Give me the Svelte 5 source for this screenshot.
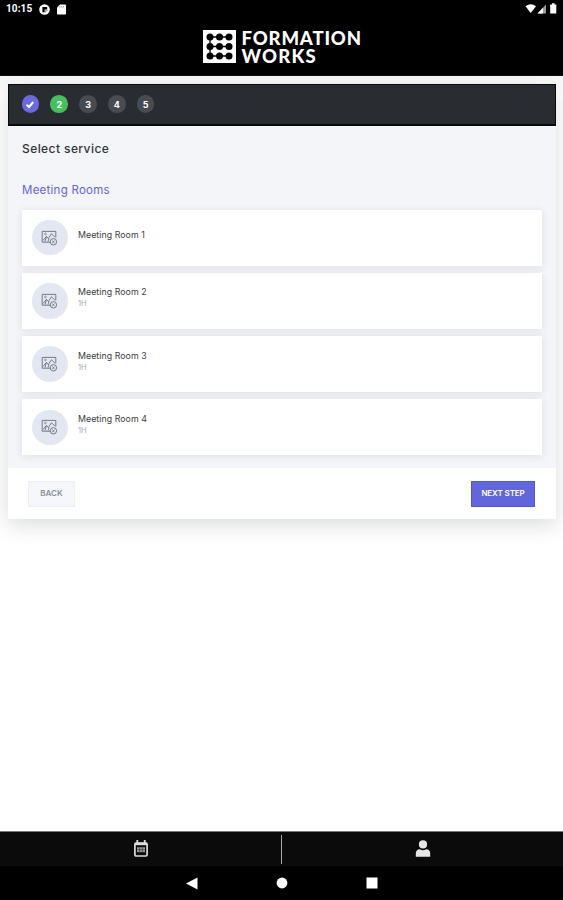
<script>
  const steps = ['✓', '2', '3', '4', '5'];
  const rooms = [
    { name: 'Meeting Room 1', length: '' },
    { name: 'Meeting Room 2', length: '1H' },
    { name: 'Meeting Room 3', length: '1H' },
    { name: 'Meeting Room 4', length: '1H' }
  ];
  const dots = [7, 16.5, 26];
</script>

<div class="screen">
  <div class="status">
    <span class="time">10:15</span>
    <svg class="dot" width="11" height="11" viewBox="0 0 11 11">
      <circle cx="5.5" cy="5.5" r="5.3" fill="#fff" />
      <path d="M3.4 8.2V3h4.8v2.5H5.7v2.7z" fill="#000" />
      <path d="M6.5 8.8V6.6h2.4" fill="none" stroke="#888" stroke-width=".8" />
    </svg>
    <svg class="sd" width="9" height="11" viewBox="0 0 9 11">
      <path d="M3 .5h5.2q.8 0 .8.8v8.4q0 .8-.8.8H.8q-.8 0-.8-.8V3.5z" fill="#fff" />
      <path d="M3 2v1.5M4.8 2v1.5M6.6 2v1.5" stroke="#777" stroke-width=".7" />
    </svg>
    <span class="grow"></span>
    <svg width="33" height="12" viewBox="0 0 33 12">
      <path d="M.5 3.2Q5.7-.8 11 3.2L5.7 10z" fill="#fff" />
      <path d="M12.5 10.5 21 1.5v9z" fill="#999" />
      <path d="M12.5 10.5 18 4.7v5.8z" fill="#fff" />
      <path d="M25.2 1.6h1.8V.3h2.6v1.3h1.7v8.9h-6.1z" fill="#fff" />
    </svg>
  </div>

  <header>
    <svg class="mark" width="33" height="33" viewBox="0 0 33 33">
      <rect width="33" height="33" fill="#fff" />
      <path d="M7 7h19M7 16.5h19M7 26h19M7 7v19" stroke="#000" stroke-width="1.3" />
      {#each dots as y}
        {#each dots as x}
          <circle cx={x} cy={y} r="3.5" fill="#000" />
        {/each}
      {/each}
    </svg>
    <div class="brand"><span class="b1">FORMATION</span><span class="b2">WORKS</span></div>
  </header>

  <main>
    <section class="card">
      <div class="steps">
        {#each steps as s, i}
          <span class="step" class:done={i === 0} class:active={i === 1}>
            {#if i === 0}
              <svg width="10" height="9" viewBox="0 0 10 9"><path d="M1.6 4.8 4 7l4.3-5" fill="none" stroke="#fff" stroke-width="2" /></svg>
            {:else}{s}{/if}
          </span>
        {/each}
      </div>
      <div class="body">
        <h1><span>Select service</span></h1>
        <h2><span>Meeting Rooms</span></h2>
        <div class="list">
          {#each rooms as room}
            <div class="room">
              <span class="thumb">
                <svg width="17" height="16" viewBox="0 0 17 16" fill="none" stroke="#69717b" stroke-width=".9">
                  <path d="M10 12.2H1.2V1.4h13.6v6" />
                  <path d="m2 10.5 3.4-4 2 2 3-4.7 3.7 3.4M5.4 6.5 4 11.5M8 8.5 7 11.5" />
                  <circle cx="4.4" cy="3.9" r=".9" stroke-width=".6" />
                  <circle cx="12.4" cy="11.8" r="3.2" />
                  <path d="m11.3 10.8 2.2 2.1M13.5 10.8l-2.2 2.1" />
                </svg>
              </span>
              <div class="label">
                <span class="name">{room.name}</span>
                {#if room.length}<span class="len">{room.length}</span>{/if}
              </div>
            </div>
          {/each}
        </div>
      </div>
      <footer>
        <button class="back">BACK</button>
        <button class="next">NEXT STEP</button>
      </footer>
    </section>
  </main>

  <nav class="tabs">
    <span class="tab first">
      <svg width="16" height="18" viewBox="0 0 16 18">
        <path d="M4.3 0v4M11.7 0v4" stroke="#ddd" stroke-width="1.8" />
        <rect x="1.9" y="3" width="12.2" height="13" rx="1.3" fill="none" stroke="#ddd" stroke-width="1.7" />
        <path d="M2 4h12" stroke="#ddd" stroke-width="2.4" />
        <path d="M4 7.2h8v5H4z" fill="#999" />
        <path d="M4 9.7h8M6.7 7.2v5M9.4 7.2v5" stroke="#333" stroke-width=".6" />
      </svg>
    </span>
    <span class="divider"></span>
    <span class="tab">
      <svg width="16" height="18" viewBox="0 0 16 18" fill="#e6e6e6">
        <circle cx="8" cy="4.4" r="4.1" />
        <path d="M.8 16.7v-3.2q0-4 4-4.2Q8 11 11.2 9.3q4 .2 4 4.2v3.2z" />
      </svg>
    </span>
  </nav>
  <div class="system">
    <svg width="12" height="13" viewBox="0 0 12 13"><path d="M0 6.5 11.5.5v12z" fill="#fff" /></svg>
    <svg width="12" height="12" viewBox="0 0 12 12"><circle cx="6" cy="6" r="5.4" fill="#fff" /></svg>
    <svg width="12" height="12" viewBox="0 0 12 12"><rect x=".5" y=".5" width="11" height="11" fill="#fff" /></svg>
  </div>
</div>

<style>
  :global(body) { margin: 0; background: #fff; }
  .screen {
    width: 563px;
    height: 900px;
    display: flex;
    flex-direction: column;
    overflow: hidden;
    background: #fff;
    font-family: Inter, 'Open Sans', sans-serif;
  }
  .status {
    height: 18px;
    box-sizing: border-box;
    padding: 3px 5px 0 6px;
    background: #000;
    display: flex;
    align-items: flex-start;
    color: #fff;
  }
  .time { font: 700 10px/12px Roboto, sans-serif; width: 33px; letter-spacing: 0.1px; }
  .dot { margin-top: 0.5px; }
  .sd { margin: 0.5px 0 0 7px; }
  .grow { flex: 1; }
  header {
    height: 58px;
    flex: none;
    box-sizing: border-box;
    padding: 12px 0 0 203px;
    background: #000;
    display: flex;
    border-bottom: 1px solid #111;
  }
  .brand {
    margin: -1px 0 0 5.5px;
    display: flex;
    flex-direction: column;
    color: #fff;
    font: 900 18.5px/18px Lato, sans-serif;
    white-space: nowrap;
  }
  .b1 { letter-spacing: 0.85px; }
  .b2 { letter-spacing: 1.2px; }
  main { flex: 1; padding: 8px 7px 0 8px; background: linear-gradient(#f7f7f8, #fff 20px); }
  .card { background: #fff; box-shadow: 0 6px 20px rgba(40, 45, 55, 0.17); }
  .steps {
    height: 41.5px;
    box-sizing: border-box;
    border: 1px solid #08090b;
    border-bottom-width: 2px;
    background: #292d32;
    display: flex;
    align-items: center;
    gap: 11.2px;
    padding-left: 12.7px;
  }
  .step {
    flex: none;
    width: 17.6px;
    height: 17.6px;
    border-radius: 50%;
    background: #484c51;
    color: #fff;
    font: 700 9px/17px Inter, sans-serif;
    display: flex;
    align-items: center;
    justify-content: center;
  }
  .done { background: #696bdc; }
  .active { background: #49bd62; }
  .body {
    height: 342.5px;
    box-sizing: border-box;
    background: #f3f5f9;
    padding: 0 14px;
  }
  h1, h2 { margin: 0; font-weight: 500; white-space: nowrap; }
  h1 { height: 44px; font-size: 12px; line-height: 45px; color: #30343a; letter-spacing: 0.42px; }
  h2 { height: 40px; font-size: 11.5px; line-height: 41px; color: #6663dd; font-weight: 400; letter-spacing: 0.25px; }
  .list { display: flex; flex-direction: column; gap: 7.3px; }
  .room {
    height: 56px;
    box-sizing: border-box;
    background: #fff;
    box-shadow: 0 1px 8px rgba(40, 45, 55, 0.11);
    display: flex;
    align-items: center;
    padding-left: 10px;
  }
  .thumb {
    width: 35.5px;
    height: 35.5px;
    border-radius: 50%;
    background: #e2e7f2;
    display: flex;
    align-items: center;
    justify-content: center;
  }
  .label { height: 24px; margin: -5px 0 0 10.5px; display: flex; flex-direction: column; justify-content: center; white-space: nowrap; }
  .name { font-size: 8.8px; line-height: 12px; color: #3b3e42; letter-spacing: 0.05px; }
  .len { font-size: 7.5px; line-height: 12px; color: #a5a8ad; }
  footer {
    height: 51px;
    box-sizing: border-box;
    padding: 0 21px 0 20px;
    display: flex;
    align-items: center;
    justify-content: space-between;
  }
  button { height: 26px; box-sizing: border-box; border: 0; padding: 0; font: 600 8px/23px Inter, sans-serif; white-space: nowrap; }
  .back { width: 47px; background: #f6f7fb; border: 1px solid #eef0f4; color: #899099; }
  .next { width: 64px; background: #6366da; border: 1px solid #5355c8; color: #fff; letter-spacing: -0.1px; }
  .tabs {
    height: 35px;
    flex: none;
    box-sizing: border-box;
    border-top: 1px solid #777;
    background: #0b0b0b;
    display: flex;
    align-items: center;
  }
  .tab { flex: 1; display: flex; justify-content: center; }
  .first { padding-left: 1px; margin-right: -1px; }
  .divider { width: 1.5px; height: 29px; background: #aaa; }
  .system {
    height: 34px;
    flex: none;
    background: #000;
    display: flex;
    align-items: center;
    justify-content: center;
    gap: 78px;
  }
</style>
